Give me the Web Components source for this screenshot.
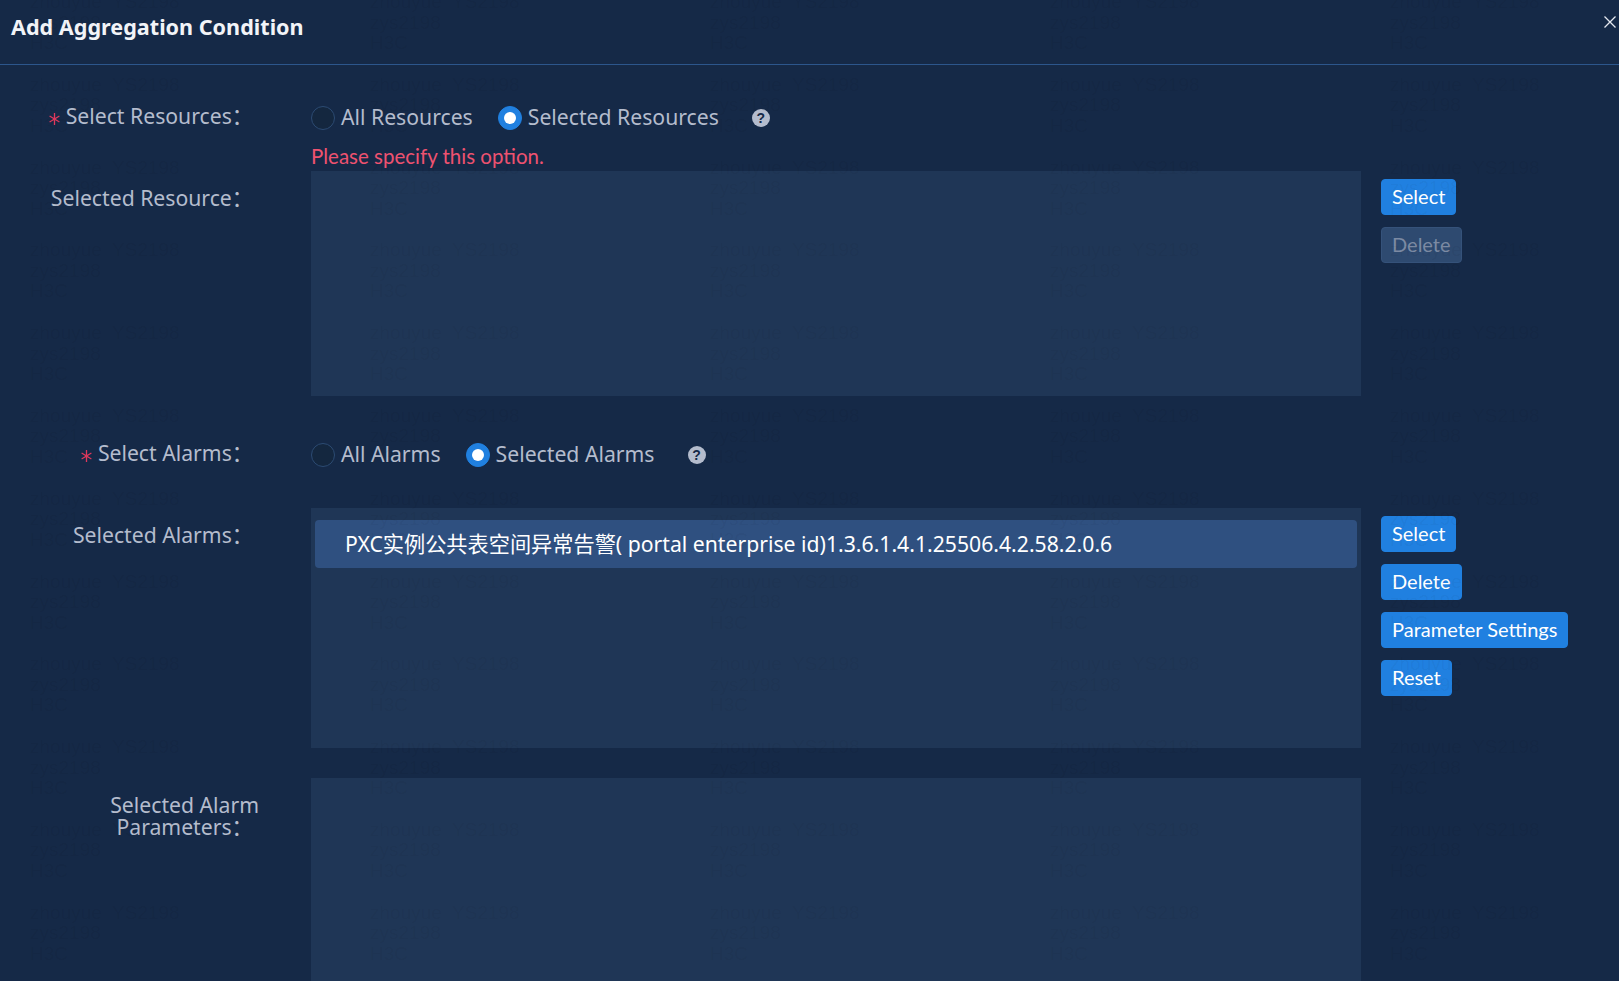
<!DOCTYPE html>
<html>
<head>
<meta charset="utf-8">
<title>Add Aggregation Condition</title>
<style>
  html, body { margin: 0; height: 981px; overflow: hidden; background: #152947; }
  body { font-family: "Noto Sans", "Noto Sans CJK SC", sans-serif; font-size: 21.2px; color: #b4bccd; }
</style>
</head>
<body>
<aggregation-dialog>
  <dialog-header slot="header">Add Aggregation Condition</dialog-header>

  <form-row required style="--row-top: 37px">
    <span slot="label">Select Resources：</span>
    <radio-group>
      <radio-option>All Resources</radio-option>
      <radio-option checked>Selected Resources</radio-option>
      <help-icon></help-icon>
    </radio-group>
  </form-row>
  <error-text>Please specify this option.</error-text>

  <form-row panel style="--row-top: 0px">
    <span slot="label">Selected Resource：</span>
    <list-panel style="--panel-height: 225px"></list-panel>
    <action-stack slot="actions">
      <action-button>Select</action-button>
      <action-button disabled>Delete</action-button>
    </action-stack>
  </form-row>

  <form-row required style="--row-top: 43px">
    <span slot="label">Select Alarms：</span>
    <radio-group>
      <radio-option>All Alarms</radio-option>
      <radio-option checked>Selected Alarms</radio-option>
      <help-icon></help-icon>
    </radio-group>
  </form-row>

  <form-row panel style="--row-top: 37px">
    <span slot="label">Selected Alarms：</span>
    <list-panel style="--panel-height: 240px">
      <list-item>PXC实例公共表空间异常告警( portal enterprise id)1.3.6.1.4.1.25506.4.2.58.2.0.6</list-item>
    </list-panel>
    <action-stack slot="actions">
      <action-button>Select</action-button>
      <action-button>Delete</action-button>
      <action-button>Parameter Settings</action-button>
      <action-button>Reset</action-button>
    </action-stack>
  </form-row>

  <form-row panel multiline style="--row-top: 30px">
    <span slot="label">Selected Alarm<br>Parameters：</span>
    <list-panel style="--panel-height: 240px"></list-panel>
  </form-row>

  <watermark-layer slot="overlay"></watermark-layer>
</aggregation-dialog>

<script>
  class AggregationDialog extends HTMLElement {
    constructor() {
      super();
      this.attachShadow({ mode: "open" });
      this.shadowRoot.innerHTML = `
        <style>
          :host { display: block; position: relative; width: 1619px; height: 981px; overflow: hidden; }
          .body { display: flex; flex-direction: column; }
        </style>
        <slot name="header"></slot>
        <div class="body"><slot></slot></div>
        <slot name="overlay"></slot>
      `;
    }
  }

  class DialogHeader extends HTMLElement {
    constructor() {
      super();
      this.attachShadow({ mode: "open" });
      this.shadowRoot.innerHTML = `
        <style>
          :host {
            display: flex; justify-content: space-between; align-items: flex-start;
            box-sizing: border-box; height: 65px; padding: 12px 3px 0 11px;
            border-bottom: 1px solid #2c568c;
            color: #f2f4f8; font-size: 21.6px; font-weight: 700; line-height: 30px;
          }
          svg { margin-top: 4px; display: block; }
        </style>
        <span><slot></slot></span>
        <svg width="12" height="12" viewBox="0 0 12 12" fill="none" stroke="#e4e8ef" stroke-width="1.3">
          <path d="M.5.5l11 11M11.5.5l-11 11"/>
        </svg>
      `;
    }
  }

  class FormRow extends HTMLElement {
    constructor() {
      super();
      this.attachShadow({ mode: "open" });
      this.shadowRoot.innerHTML = `
        <style>
          :host {
            display: grid; grid-template-columns: 259px 1050px auto; column-gap: 52px;
            margin-top: var(--row-top, 0);
          }
          .content { min-width: 0; }
          .label {
            justify-self: end; padding-right: 6px;
            text-align: right; line-height: 21.5px; padding-top: 3px; white-space: nowrap;
          }
          :host([panel]) .label { padding-top: 16px; }
          :host([multiline]) .label { padding-right: 0; padding-top: 16px; text-align: center; }
          .star { display: none; width: 11px; height: 12px; margin-right: 6px; vertical-align: -1px; }
          :host([required]) .star { display: inline-block; }
          .actions { margin-left: -32px; }
        </style>
        <div class="label">
          <svg class="star" viewBox="0 0 11 12" fill="none" stroke="#e0385c" stroke-width="1.3">
            <path d="M5.5 0v12M.6 3l9.8 6M10.4 3L.6 9"/>
          </svg><slot name="label"></slot>
        </div>
        <div class="content"><slot></slot></div>
        <div class="actions"><slot name="actions"></slot></div>
      `;
    }
  }

  class RadioGroup extends HTMLElement {
    constructor() {
      super();
      this.attachShadow({ mode: "open" });
      this.shadowRoot.innerHTML = `
        <style>
          :host { display: flex; align-items: center; gap: 25px; height: 32px; }
        </style>
        <slot></slot>
      `;
    }
  }

  class RadioOption extends HTMLElement {
    constructor() {
      super();
      this.attachShadow({ mode: "open" });
      this.shadowRoot.innerHTML = `
        <style>
          :host { display: inline-flex; align-items: center; gap: 6px; line-height: 24px; white-space: nowrap; }
          .dot {
            box-sizing: border-box; width: 24px; height: 24px; border-radius: 50%;
            border: 1px solid #2c4b73; background: #14273f;
            display: flex; align-items: center; justify-content: center;
          }
          .text { position: relative; top: -1px; }
          :host([checked]) .dot { background: #2080e0; border-color: #2080e0; }
          :host([checked]) .dot::after { content: ""; width: 12px; height: 12px; border-radius: 50%; background: #fff; }
        </style>
        <span class="dot"></span><span class="text"><slot></slot></span>
      `;
    }
  }

  class HelpIcon extends HTMLElement {
    constructor() {
      super();
      this.attachShadow({ mode: "open" });
      this.shadowRoot.innerHTML = `
        <style>
          :host {
            display: flex; align-items: center; justify-content: center;
            width: 18px; height: 18px; margin-left: 8px; border-radius: 50%;
            background: #b4bccd; color: #152947;
            font: 700 14px/18px "Liberation Sans", sans-serif;
          }
        </style>
        ?
      `;
    }
  }

  class ErrorText extends HTMLElement {
    constructor() {
      super();
      this.attachShadow({ mode: "open" });
      this.shadowRoot.innerHTML = `
        <style>
          :host {
            display: block; margin-left: 311px; height: 37px; box-sizing: border-box;
            padding-top: 8px; line-height: 28px; color: #ee5270;
            font-family: Lato, "Noto Sans", sans-serif; font-size: 20.5px;
          }
        </style>
        <slot></slot>
      `;
    }
  }

  class ListPanel extends HTMLElement {
    constructor() {
      super();
      this.attachShadow({ mode: "open" });
      this.shadowRoot.innerHTML = `
        <style>
          :host {
            display: block; box-sizing: border-box; height: var(--panel-height, 240px);
            padding: 12px 4px; background: #1f3656;
          }
        </style>
        <slot></slot>
      `;
    }
  }

  class ListItem extends HTMLElement {
    constructor() {
      super();
      this.attachShadow({ mode: "open" });
      this.shadowRoot.innerHTML = `
        <style>
          :host {
            display: block; height: 48px; padding-left: 30px; border-radius: 4px;
            background: #2f5080; color: #fff; line-height: 48px; white-space: nowrap;
          }
        </style>
        <slot></slot>
      `;
    }
  }

  class ActionStack extends HTMLElement {
    constructor() {
      super();
      this.attachShadow({ mode: "open" });
      this.shadowRoot.innerHTML = `
        <style>
          :host { display: flex; flex-direction: column; align-items: flex-start; gap: 12px; padding-top: 8px; }
        </style>
        <slot></slot>
      `;
    }
  }

  class ActionButton extends HTMLElement {
    constructor() {
      super();
      this.attachShadow({ mode: "open" });
      this.shadowRoot.innerHTML = `
        <style>
          :host {
            display: block; box-sizing: border-box; height: 36px; padding: 0 10px;
            border: 1px solid #2080e0; border-radius: 4px;
            background: #2080e0; color: #fff; line-height: 33px; white-space: nowrap;
            font-family: Lato, "Noto Sans", sans-serif; font-size: 20px;
          }
          :host([disabled]) { background: #2e4a70; border-color: #35527a; color: #7c8aa3; }
        </style>
        <slot></slot>
      `;
    }
  }

  class WatermarkLayer extends HTMLElement {
    constructor() {
      super();
      this.attachShadow({ mode: "open" });
      let cells = "";
      for (let i = 0; i < 60; i++) {
        cells += `<div>zhouyue  YS2198<br>zys2198<br>H3C</div>`;
      }
      this.shadowRoot.innerHTML = `
        <style>
          :host {
            position: absolute; top: -8px; left: 30px; pointer-events: none;
            display: grid; grid-template-columns: repeat(5, 340px); grid-auto-rows: 82.8px;
            font: 19px/20.5px "Liberation Sans", sans-serif; color: rgba(0, 0, 0, 0.05);
            white-space: pre;
          }
        </style>
        ${cells}
      `;
    }
  }

  customElements.define("aggregation-dialog", AggregationDialog);
  customElements.define("dialog-header", DialogHeader);
  customElements.define("form-row", FormRow);
  customElements.define("radio-group", RadioGroup);
  customElements.define("radio-option", RadioOption);
  customElements.define("help-icon", HelpIcon);
  customElements.define("error-text", ErrorText);
  customElements.define("list-panel", ListPanel);
  customElements.define("list-item", ListItem);
  customElements.define("action-stack", ActionStack);
  customElements.define("action-button", ActionButton);
  customElements.define("watermark-layer", WatermarkLayer);
</script>
</body>
</html>
